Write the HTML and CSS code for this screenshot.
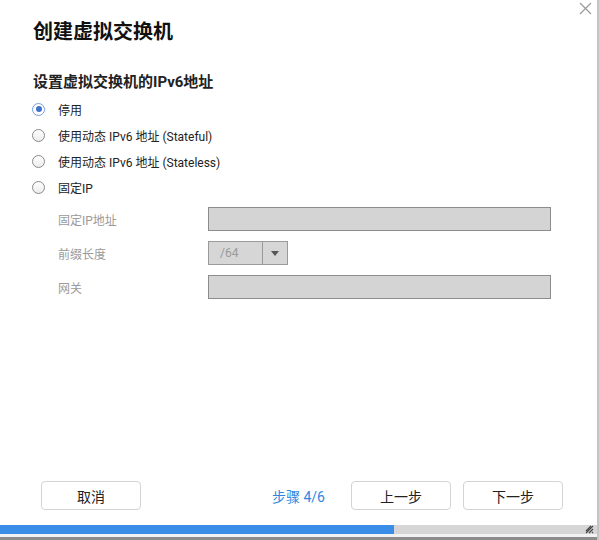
FILE: index.html
```html
<!DOCTYPE html>
<html lang="zh">
<head>
<meta charset="utf-8">
<title>创建虚拟交换机</title>
<link rel="stylesheet" href="styles.css">
</head>
<body>
<div class="dialog">
  <button class="close" aria-label="关闭">
    <svg width="13" height="13" viewBox="0 0 13 13"><path d="M1 1L12 12M12 1L1 12" stroke="#9a9a9a" stroke-width="1.2" fill="none"/></svg>
  </button>
  <div class="content">
    <h1 class="title">创建虚拟交换机</h1>
    <h2 class="subtitle">设置虚拟交换机的IPv6地址</h2>
    <div class="options">
      <label class="option"><span class="radio checked"></span><span>停用</span></label>
      <label class="option"><span class="radio"></span><span>使用动态 IPv6 地址 (Stateful)</span></label>
      <label class="option"><span class="radio"></span><span>使用动态 IPv6 地址 (Stateless)</span></label>
      <label class="option"><span class="radio"></span><span>固定IP</span></label>
    </div>
    <div class="form">
      <div class="form-row"><span class="form-label">固定IP地址</span><span class="input"></span></div>
      <div class="form-row"><span class="form-label">前缀长度</span>
        <span class="select"><span class="select-value">/64</span><span class="select-arrow"><svg width="8" height="5" viewBox="0 0 8 5"><path d="M0 0H8L4 5Z" fill="#555"/></svg></span></span>
      </div>
      <div class="form-row"><span class="form-label">网关</span><span class="input"></span></div>
    </div>
  </div>
  <div class="footer">
    <button class="btn">取消</button>
    <div class="footer-right">
      <span class="step">步骤 4/6</span>
      <button class="btn">上一步</button>
      <button class="btn">下一步</button>
    </div>
  </div>
  <div class="progress"><div class="progress-fill"></div>
    <svg class="grip" width="10" height="10" viewBox="0 0 10 10"><path d="M9 2L2 9M9 5L5 9M9 8L8 9M7 2L2 7" stroke="#444" stroke-width="1.1"/></svg>
  </div>
  <div class="edge"></div>
</div>
</body>
</html>
```
FILE: styles.css
```css
* { box-sizing: border-box; }
html, body { margin: 0; padding: 0; background: #fff; }
body {
  font-family: Roboto, "Noto Sans CJK SC", "Noto Sans", sans-serif;
  color: #222;
}
.dialog {
  position: relative;
  width: 599px;
  height: 540px;
  border-right: 2px solid #c4c4c4;
  display: flex;
  flex-direction: column;
  background: #fff;
}
.close {
  position: absolute;
  top: 2px;
  right: 5px;
  border: 0;
  background: none;
  padding: 0;
  width: 13px;
  height: 13px;
  display: flex;
}
.content {
  flex: 1;
  padding-left: 33px;
  padding-top: 20px;
}
.title {
  margin: 0;
  font-size: 20px;
  line-height: 24px;
  font-weight: 700;
  color: #111;
}
.subtitle {
  margin: 28px 0 4px;
  font-size: 15px;
  line-height: 20px;
  font-weight: 700;
  color: #222;
}
.options { display: flex; flex-direction: column; }
.option {
  display: flex;
  align-items: center;
  height: 26px;
  font-size: 12px;
  color: #222;
}
.radio {
  width: 13px;
  height: 13px;
  border-radius: 50%;
  border: 1px solid #8a8a8a;
  background: linear-gradient(#fff, #ececec);
  margin-left: -1px;
  margin-right: 13px;
  display: flex;
  align-items: center;
  justify-content: center;
  flex: none;
}
.radio.checked { border-color: #7a9ed6; background: #fff; }
.radio.checked::after {
  content: "";
  width: 6px;
  height: 6px;
  border-radius: 50%;
  background: #3f72c9;
}
.form {
  margin-top: 7px;
  padding-left: 25px;
  display: flex;
  flex-direction: column;
  gap: 10px;
}
.form-row {
  display: flex;
  align-items: center;
  height: 24px;
}
.form-label {
  width: 150px;
  font-size: 12px;
  color: #9a9a9a;
}
.input {
  width: 343px;
  height: 24px;
  background: #d4d4d4;
  border: 1px solid #8c8c8c;
}
.select {
  width: 80px;
  height: 24px;
  background: #d6d6d6;
  border: 1px solid #9a9a9a;
  display: flex;
}
.select-value {
  flex: 1;
  font-size: 12px;
  color: #9a9a9a;
  padding-left: 11px;
  line-height: 22px;
}
.select-arrow {
  width: 25px;
  border-left: 1px solid #9a9a9a;
  display: flex;
  align-items: center;
  justify-content: center;
}
.footer {
  display: flex;
  justify-content: space-between;
  align-items: center;
  padding: 0 34px 0 41px;
  margin-bottom: 15px;
}
.footer-right { display: flex; align-items: center; gap: 12px; }
.step {
  color: #2f86e0;
  font-size: 14px;
  margin-right: 14px;
}
.btn {
  width: 100px;
  height: 29px;
  border: 1px solid #d4d4d4;
  border-radius: 4px;
  background: #fff;
  font-family: inherit;
  font-size: 14px;
  color: #222;
  padding: 0;
}
.progress {
  position: relative;
  height: 9px;
  background: #d6d6d6;
}
.progress-fill {
  width: 394px;
  height: 100%;
  background: #3a8ee8;
}
.grip {
  position: absolute;
  right: 3px;
  top: -1px;
}
.edge {
  height: 6px;
  background: linear-gradient(#f2f2f2 0, #f2f2f2 3px, #8c8c8c 3px);
}
```
